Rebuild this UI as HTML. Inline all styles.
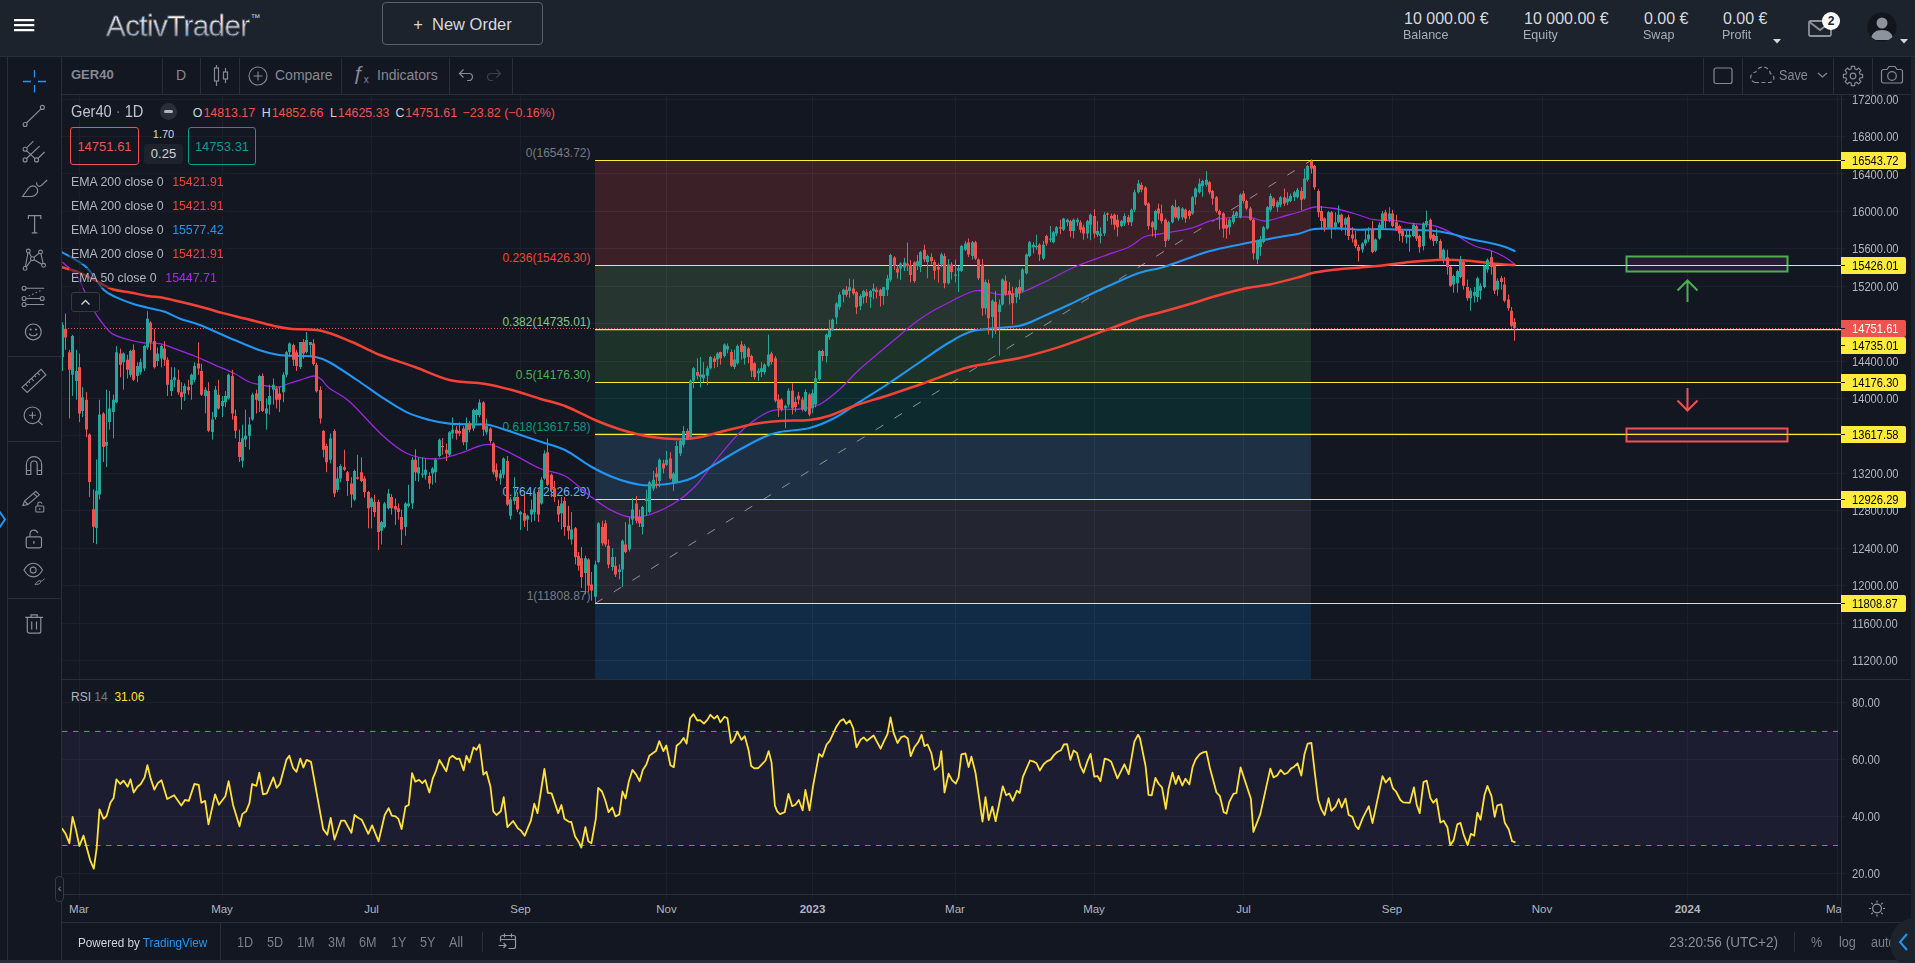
<!DOCTYPE html>
<html lang="en"><head><meta charset="utf-8"><title>ActivTrader</title>
<style>
*{box-sizing:border-box;margin:0;padding:0}
html,body{width:1915px;height:963px;overflow:hidden;background:#131722}
body{font-family:"Liberation Sans","DejaVu Sans",sans-serif;color:#b2b5be;position:relative}
#app{position:absolute;left:0;top:0;width:1915px;height:963px;overflow:hidden;background:#131722}
.abs{position:absolute;white-space:nowrap;line-height:1}
#hdr{position:absolute;left:0;top:0;width:1915px;height:56px;background:#1c232c;border-bottom:0}
.ax{position:absolute;left:1851.5px;font-size:12px;color:#b2b5be;line-height:12px;height:12px;white-space:nowrap}
.tag{position:absolute;left:1841px;width:65px;height:17px;border-radius:0 2px 2px 0;font-size:12px;line-height:18px;padding-left:11px;color:#000;background:#ffeb3b;white-space:nowrap}
.tag:before{content:"";position:absolute;left:0;top:8px;width:4px;height:1px;background:#131722}
.tl{position:absolute;top:903px;font-size:11.5px;color:#b2b5be;line-height:12px;transform:translateX(-50%);white-space:nowrap}
.fib{position:absolute;right:1325px;font-size:11.5px;line-height:12px;white-space:nowrap}
.ema{position:absolute;left:69px;padding:3px 4px 3px 2px;margin-top:-3px;background:rgba(19,23,34,.5);font-size:13px;line-height:14px;color:#b2b5be;white-space:nowrap;transform-origin:0 50%;transform:scaleX(.95)}
.ema b{font-weight:normal;margin-left:9px}
.tb{position:absolute;top:57px;height:36px;line-height:36px;font-size:14px;color:#868993;white-space:nowrap}
.sep{position:absolute;top:58px;width:1px;height:36px;background:#2a2e39}
.rg{position:absolute;top:934px;font-size:14px;line-height:16px;color:#7c7f8a;white-space:nowrap;transform-origin:0 50%;transform:scaleX(.9)}
.hv{position:absolute;top:9.5px;margin-left:1px;font-size:16px;line-height:18px;color:#d6d9de;white-space:nowrap}
.hl{position:absolute;top:27px;font-size:13.5px;line-height:16px;transform-origin:0 50%;transform:scaleX(.93);color:#a9aeb6;white-space:nowrap}
.ic{position:absolute;left:20px;width:28px;height:28px}
.ic svg{width:28px;height:28px;display:block}
.sx{display:inline-block;transform-origin:0 50%}
.ax span,.tag span{display:inline-block;transform-origin:0 50%;transform:scaleX(.93)}
</style></head><body><div id="app">
<svg width="1915" height="963" viewBox="0 0 1915 963" style="position:absolute;left:0;top:0;font-family:Liberation Sans,sans-serif" shape-rendering="auto">
<defs><clipPath id="cm"><rect x="62" y="95" width="1779" height="584"/></clipPath><clipPath id="cr"><rect x="62" y="680" width="1779" height="214"/></clipPath></defs>
<path d="M79.5 95V679M79.5 680V899M222.5 95V679M222.5 680V899M371.5 95V679M371.5 680V899M520.5 95V679M520.5 680V899M666.5 95V679M666.5 680V899M812.5 95V679M812.5 680V899M955.5 95V679M955.5 680V899M1094.5 95V679M1094.5 680V899M1243.5 95V679M1243.5 680V899M1392.5 95V679M1392.5 680V899M1542.5 95V679M1542.5 680V899M1687.5 95V679M1687.5 680V899M1837.5 95V679M1837.5 680V899M62 660.5H1846M62 623.1H1846M62 585.6H1846M62 548.2H1846M62 510.8H1846M62 473.3H1846M62 435.9H1846M62 398.5H1846M62 361.0H1846M62 323.6H1846M62 286.2H1846M62 248.7H1846M62 211.3H1846M62 173.9H1846M62 136.4H1846M62 99.0H1846M62 873.2H1846M62 816.3H1846M62 759.3H1846M62 702.4H1846" stroke="#1c202c" stroke-width="1" fill="none" shape-rendering="crispEdges"/>
<g clip-path="url(#cm)">
<rect x="595" y="160.5" width="716" height="105.0" fill="#3b2027"/>
<rect x="595" y="265.5" width="716" height="64.1" fill="#263530"/>
<rect x="595" y="329.6" width="716" height="52.9" fill="#1d3229"/>
<rect x="595" y="382.5" width="716" height="51.9" fill="#0d2b2e"/>
<rect x="595" y="434.4" width="716" height="65.1" fill="#1e3044"/>
<rect x="595" y="499.5" width="716" height="104.0" fill="#232630"/>
<rect x="595" y="603.5" width="716" height="75.5" fill="#112b46"/>
<path d="M666.5 160.5V679M812.5 160.5V679M955.5 160.5V679M1094.5 160.5V679M1243.5 160.5V679M595 660.5H1311M595 623.1H1311M595 585.6H1311M595 548.2H1311M595 510.8H1311M595 473.3H1311M595 435.9H1311M595 398.5H1311M595 361.0H1311M595 323.6H1311M595 286.2H1311M595 248.7H1311M595 211.3H1311M595 173.9H1311" stroke="#ffffff" stroke-opacity="0.05" stroke-width="1" fill="none" shape-rendering="crispEdges"/>
<path d="M595 603.5L1311 160.5" stroke="#8f929b" stroke-width="1" stroke-dasharray="9 13" fill="none"/>
<path d="M595 160.50H1841" stroke="#ffeb3b" stroke-width="1.1" fill="none"/>
<path d="M595 265.50H1841" stroke="#ffeb3b" stroke-width="1.1" fill="none"/>
<path d="M595 329.60H1841" stroke="#ffeb3b" stroke-width="1.1" fill="none"/>
<path d="M595 382.50H1841" stroke="#ffeb3b" stroke-width="1.1" fill="none"/>
<path d="M595 434.40H1841" stroke="#ffeb3b" stroke-width="1.1" fill="none"/>
<path d="M595 499.50H1841" stroke="#ffeb3b" stroke-width="1.1" fill="none"/>
<path d="M595 603.50H1841" stroke="#ffeb3b" stroke-width="1.1" fill="none"/>
<rect x="1626.5" y="256.5" width="161" height="15" fill="#2a1a38" stroke="#4caf50" stroke-width="2"/>
<path d="M62 265.9H1841" stroke="#ffeb3b" stroke-width="1.1" opacity="0"/>
<path d="M1626 265.50H1788" stroke="#ffeb3b" stroke-width="1.1"/>
<rect x="1626.5" y="428.5" width="161" height="13" fill="#2a1a38" stroke="#ef5350" stroke-width="2"/>
<path d="M1626 434.40H1788" stroke="#ffeb3b" stroke-width="1.1"/>
<path d="M1687.5 302V280.5M1677.5 290.5L1687.5 280.5L1697.5 290.5" stroke="#4caf50" stroke-width="2" fill="none"/>
<path d="M1687.5 388V410.5M1677.5 400.5L1687.5 410.5L1697.5 400.5" stroke="#ef5350" stroke-width="2" fill="none"/>
<path d="M62 328.5H1841" stroke="#ef5350" stroke-width="1" stroke-dasharray="1 2" fill="none" shape-rendering="crispEdges"/>
<text x="590.5" y="156.7" text-anchor="end" font-size="12" fill="#787b86">0(16543.72)</text>
<text x="590.5" y="261.7" text-anchor="end" font-size="12" fill="#f44336">0.236(15426.30)</text>
<text x="590.5" y="325.8" text-anchor="end" font-size="12" fill="#81c784">0.382(14735.01)</text>
<text x="590.5" y="378.7" text-anchor="end" font-size="12" fill="#4caf50">0.5(14176.30)</text>
<text x="590.5" y="430.6" text-anchor="end" font-size="12" fill="#089981">0.618(13617.58)</text>
<text x="590.5" y="495.7" text-anchor="end" font-size="12" fill="#64b5f6">0.764(12926.29)</text>
<text x="590.5" y="599.7" text-anchor="end" font-size="12" fill="#787b86">1(11808.87)</text>
<path d="M62.0 262.0C64.4 264.2 72.4 269.8 76.5 275.4C80.6 281.0 83.8 290.0 86.4 295.4C89.0 300.8 89.7 303.4 92.0 307.5C94.3 311.6 96.7 315.6 100.0 320.0C103.3 324.4 107.0 330.3 112.0 333.6C117.0 336.9 124.5 338.4 130.0 340.0C135.4 341.6 139.8 342.4 144.7 343.0C149.6 343.6 154.7 342.7 159.7 343.6C164.7 344.5 168.8 346.5 174.6 348.6C180.4 350.7 187.9 353.3 194.6 356.0C201.2 358.7 207.8 361.9 214.5 364.8C221.2 367.7 228.7 370.6 234.5 373.5C240.3 376.4 244.0 379.9 249.4 382.0C254.8 384.1 262.1 385.2 267.0 386.0C271.9 386.8 275.3 387.4 279.0 387.0C282.7 386.6 285.5 384.7 289.0 383.5C292.5 382.3 295.8 381.2 300.0 380.0C304.2 378.8 310.3 376.0 314.0 376.0C317.7 376.0 319.5 378.0 322.0 380.0C324.5 382.0 324.3 384.3 329.0 388.0C333.7 391.7 341.2 394.2 350.0 402.0C358.8 409.8 372.5 426.4 382.0 435.0C391.5 443.6 398.2 449.5 407.0 453.5C415.8 457.5 425.9 459.0 434.6 459.0C443.4 459.0 452.0 455.7 459.5 453.5C467.0 451.3 474.0 447.4 479.4 446.0C484.8 444.6 486.2 443.3 492.0 444.8C497.8 446.3 506.0 450.9 514.0 454.8C522.0 458.8 531.5 465.0 540.0 468.5C548.5 472.0 556.7 471.4 565.0 476.0C573.3 480.6 582.5 490.4 590.0 496.0C597.5 501.6 603.4 506.1 610.0 509.6C616.6 513.1 623.1 516.2 629.7 517.0C636.3 517.8 642.2 516.9 649.7 514.6C657.2 512.3 667.1 507.6 674.6 503.0C682.1 498.4 687.9 493.8 694.5 487.0C701.1 480.2 707.9 470.1 714.5 462.0C721.1 453.9 727.8 445.3 734.0 438.6C740.2 431.9 745.7 426.6 752.0 422.0C758.3 417.4 764.1 412.9 772.0 410.7C779.9 408.5 791.7 410.0 799.6 409.0C807.5 408.0 813.0 407.8 819.6 404.5C826.2 401.2 832.9 395.3 839.5 389.5C846.1 383.7 851.5 376.9 859.4 369.6C867.3 362.4 876.9 354.4 887.0 346.0C897.1 337.6 910.3 325.9 920.0 319.0C929.7 312.1 935.8 309.2 945.0 304.5C954.2 299.8 965.9 292.5 975.0 290.8C984.1 289.1 992.3 294.1 999.8 294.5C1007.2 294.9 1012.2 295.1 1019.7 293.0C1027.2 290.9 1035.5 286.3 1044.6 282.0C1053.7 277.7 1064.6 271.3 1074.5 267.0C1084.4 262.7 1094.9 259.3 1104.0 256.0C1113.1 252.7 1122.3 250.2 1129.0 247.0C1135.7 243.8 1138.8 239.2 1144.0 237.0C1149.2 234.8 1152.3 235.4 1160.0 234.0C1167.7 232.6 1180.8 230.8 1190.0 228.4C1199.2 226.0 1205.5 221.6 1215.0 219.7C1224.5 217.8 1238.7 216.8 1247.0 217.0C1255.3 217.2 1258.4 221.2 1264.7 221.0C1271.0 220.8 1278.8 217.5 1284.6 216.0C1290.4 214.5 1294.6 213.5 1299.6 212.0C1304.6 210.5 1308.7 207.6 1314.5 207.0C1320.3 206.4 1327.9 207.4 1334.5 208.5C1341.1 209.6 1347.4 211.6 1354.0 213.5C1360.6 215.4 1367.2 218.5 1374.0 219.7C1380.8 220.9 1388.7 219.9 1395.0 220.5C1401.3 221.1 1405.3 222.6 1412.0 223.5C1418.7 224.4 1427.8 224.1 1435.0 226.0C1442.2 227.9 1448.4 231.4 1455.0 234.7C1461.6 238.0 1468.5 243.3 1474.7 246.0C1480.9 248.7 1487.0 249.2 1492.0 251.0C1497.0 252.8 1500.8 254.8 1504.6 257.0C1508.4 259.2 1512.9 262.8 1514.6 264.0" stroke="#9c27e0" stroke-width="1.3" fill="none" stroke-linejoin="round"/>
<path d="M62.0 252.3C63.8 253.2 68.7 255.6 72.5 257.9C76.3 260.2 81.7 263.2 85.0 266.0C88.3 268.8 89.4 270.8 92.6 274.8C95.8 278.8 99.9 286.1 103.9 289.9C107.9 293.7 111.6 295.1 116.4 297.4C121.2 299.7 127.5 302.0 132.7 303.7C137.9 305.4 142.5 306.4 147.7 307.7C152.9 309.0 158.6 309.8 164.0 311.6C169.4 313.4 174.7 316.6 180.3 318.7C185.9 320.8 192.9 322.6 197.8 324.3C202.7 326.0 203.4 326.4 209.5 329.0C215.6 331.6 226.2 336.5 234.5 340.0C242.8 343.5 251.6 347.5 259.0 350.0C266.4 352.5 272.2 354.0 279.0 355.0C285.8 356.0 294.2 355.7 300.0 356.0C305.8 356.3 309.2 355.6 314.0 356.6C318.8 357.6 321.8 358.1 329.0 362.0C336.2 365.9 348.2 374.1 357.0 380.0C365.8 385.9 373.7 392.0 382.0 397.4C390.3 402.8 399.1 408.6 407.0 412.4C414.9 416.2 422.5 418.1 429.6 420.0C436.7 421.9 442.0 422.9 449.5 423.6C457.0 424.3 467.9 424.2 474.5 424.4C481.1 424.6 483.1 423.7 489.4 425.0C495.6 426.3 503.6 429.2 512.0 432.0C520.4 434.8 531.2 438.5 540.0 441.5C548.8 444.5 556.7 445.9 565.0 450.0C573.3 454.1 581.7 461.3 590.0 466.0C598.3 470.7 606.7 474.9 615.0 478.0C623.3 481.1 632.6 483.6 640.0 484.7C647.4 485.8 653.0 485.1 659.6 484.7C666.2 484.2 673.8 483.3 679.6 482.0C685.4 480.7 688.7 479.9 694.5 477.0C700.3 474.1 707.1 469.2 714.5 464.7C721.9 460.2 730.8 454.6 739.0 450.0C747.2 445.4 757.2 440.0 764.0 437.0C770.8 434.0 772.4 433.5 780.0 432.0C787.6 430.5 800.5 430.3 809.6 428.0C818.7 425.7 826.2 422.3 834.5 418.0C842.8 413.7 850.6 407.6 859.4 402.0C868.1 396.4 876.9 391.2 887.0 384.5C897.1 377.8 909.5 369.1 920.0 362.0C930.5 354.9 940.8 347.2 950.0 342.0C959.2 336.8 963.4 333.3 975.0 330.6C986.6 327.9 1008.1 328.2 1019.7 325.7C1031.3 323.2 1036.3 319.2 1044.6 315.7C1052.9 312.2 1059.6 309.1 1069.5 304.5C1079.4 299.9 1092.4 293.2 1104.0 288.0C1115.6 282.8 1129.7 276.3 1139.0 273.0C1148.3 269.7 1152.3 270.2 1160.0 268.0C1167.7 265.8 1176.7 262.4 1185.0 259.6C1193.3 256.8 1199.7 253.8 1210.0 251.0C1220.3 248.2 1235.4 245.3 1247.0 243.0C1258.6 240.7 1270.8 238.6 1279.6 237.0C1288.4 235.4 1293.8 234.7 1299.6 233.4C1305.4 232.1 1307.9 229.8 1314.5 229.0C1321.1 228.2 1331.6 228.3 1339.0 228.4C1346.4 228.5 1352.3 229.6 1359.0 229.7C1365.7 229.8 1371.3 229.0 1379.0 229.0C1386.7 229.0 1396.5 229.6 1405.0 229.8C1413.5 230.1 1422.5 229.9 1430.0 230.5C1437.5 231.1 1443.3 232.1 1450.0 233.5C1456.7 234.9 1463.3 237.4 1470.0 239.0C1476.7 240.6 1484.2 241.7 1490.0 243.0C1495.8 244.3 1500.5 245.4 1504.6 246.7C1508.7 248.0 1512.9 250.3 1514.6 251.0" stroke="#2196f3" stroke-width="2.1" fill="none" stroke-linejoin="round" stroke-linecap="round"/>
<path d="M62.0 267.3C64.8 268.1 72.9 269.9 78.8 272.3C84.7 274.7 92.0 278.9 97.6 281.7C103.2 284.5 107.2 287.5 112.6 289.3C118.0 291.1 124.3 291.3 130.2 292.4C136.0 293.5 142.1 295.0 147.7 295.9C153.3 296.8 158.6 297.0 164.0 298.0C169.4 299.0 173.6 300.2 180.3 301.8C187.0 303.4 196.9 305.8 204.0 307.7C211.1 309.6 215.6 311.2 222.9 313.1C230.2 315.0 239.7 317.2 248.0 319.3C256.4 321.4 266.0 324.0 273.0 325.6C280.0 327.2 281.8 327.9 290.0 328.8C298.2 329.7 311.7 328.8 322.0 331.0C332.3 333.2 342.3 338.0 352.0 342.0C361.7 346.0 369.5 350.8 380.0 355.0C390.5 359.2 403.4 362.8 415.0 367.0C426.6 371.2 438.0 377.2 449.5 380.0C461.0 382.8 473.6 382.0 484.0 383.7C494.4 385.4 502.7 387.5 512.0 390.0C521.3 392.5 531.2 396.0 540.0 398.7C548.8 401.4 555.8 402.4 565.0 406.0C574.2 409.6 585.5 416.0 595.0 420.0C604.5 424.0 612.8 427.2 622.0 430.0C631.2 432.8 640.4 435.2 650.0 436.8C659.6 438.4 671.4 439.2 679.6 439.3C687.9 439.4 692.1 438.7 699.5 437.3C706.9 435.9 714.9 433.2 724.0 431.0C733.1 428.8 744.7 425.7 754.0 424.0C763.3 422.3 770.7 421.7 780.0 421.0C789.3 420.3 801.4 420.9 809.6 420.0C817.9 419.1 822.0 418.1 829.5 415.7C837.0 413.3 844.9 409.0 854.5 405.7C864.1 402.4 876.1 399.2 887.0 395.7C897.9 392.2 912.4 387.1 920.0 384.5C927.6 381.9 924.2 382.9 932.5 380.0C940.8 377.1 955.5 370.5 970.0 366.8C984.5 363.1 1004.8 361.3 1019.7 358.0C1034.6 354.7 1045.5 351.4 1059.6 346.9C1073.7 342.3 1091.2 335.5 1104.4 330.7C1117.6 325.9 1129.7 321.0 1139.0 318.0C1148.3 315.0 1151.5 314.8 1160.0 312.5C1168.5 310.2 1180.5 306.8 1190.0 304.0C1199.5 301.2 1207.5 298.4 1217.0 295.7C1226.5 293.0 1238.2 289.9 1247.0 288.0C1255.8 286.1 1260.9 286.3 1269.7 284.5C1278.5 282.7 1292.1 279.0 1299.6 277.0C1307.1 275.0 1307.1 273.9 1314.5 272.5C1321.9 271.1 1334.1 269.8 1344.0 268.8C1353.9 267.8 1364.7 267.2 1374.0 266.3C1383.3 265.4 1394.0 264.0 1400.0 263.3C1406.0 262.6 1403.0 262.6 1410.0 262.0C1417.0 261.4 1432.8 260.0 1442.0 259.7C1451.2 259.4 1456.7 259.8 1465.0 260.4C1473.3 261.0 1483.7 262.6 1492.0 263.4C1500.3 264.2 1510.8 264.7 1514.6 265.0" stroke="#f44336" stroke-width="2.5" fill="none" stroke-linejoin="round" stroke-linecap="round"/>
<path d="M62.5 322.4V371.0M72.5 334.9V396.0M76.5 349.8V399.7M82.5 387.2V417.1M96.5 459.5V544.2M99.5 399.7V499.4M106.5 389.7V467.0M109.5 391.0V429.6M113.5 394.7V438.3M116.5 346.1V403.4M123.5 352.3V389.7M130.5 349.8V377.3M137.5 362.3V382.2M140.5 358.6V374.8M144.5 344.9V371.0M147.5 311.2V349.8M157.5 347.4V366.0M161.5 344.9V367.3M171.5 367.3V396.0M174.5 367.3V387.2M184.5 383.5V400.9M191.5 373.5V399.7M194.5 362.3V382.2M205.5 387.2V413.4M212.5 412.1V439.6M215.5 386.0V419.6M222.5 396.0V417.1M225.5 391.0V407.2M228.5 373.5V399.7M242.5 424.6V467.5M245.5 409.7V447.0M249.5 417.1V449.5M252.5 392.7V420.9M259.5 374.8V412.1M266.5 398.4V429.6M269.5 384.7V414.6M273.5 378.5V404.7M283.5 372.3V402.2M286.5 351.1V377.3M289.5 342.4V357.3M300.5 342.0V369.0M306.5 332.0V353.6M310.5 342.0V356.5M330.5 433.6V463.5M337.5 467.2V492.1M340.5 464.2V482.2M354.5 469.7V500.9M371.5 497.1V528.3M381.5 520.8V544.5M384.5 502.1V528.3M388.5 489.2V509.6M405.5 502.1V535.8M408.5 484.7V507.6M412.5 457.3V509.1M418.5 457.8V481.7M422.5 457.3V477.7M425.5 458.5V479.7M432.5 467.2V484.7M435.5 457.8V482.7M439.5 438.6V457.3M449.5 431.1V456.0M452.5 417.4V438.6M466.5 417.4V449.8M473.5 408.7V431.1M476.5 408.7V424.9M479.5 399.4V417.4M486.5 418.6V434.8M500.5 469.7V484.7M503.5 457.3V478.4M510.5 497.1V519.6M514.5 477.2V504.6M520.5 510.8V530.0M527.5 514.6V530.8M531.5 499.6V522.1M534.5 490.9V520.8M541.5 477.2V504.6M544.5 450.3V479.7M561.5 497.1V529.5M571.5 512.1V544.5M585.5 555.7V594.3M595.5 560.7V603.1M598.5 522.1V563.2M612.5 548.2V570.7M619.5 564.4V579.4M622.5 539.5V586.9M629.5 517.1V551.5M632.5 498.4V525.0M642.5 505.9V534.5M646.5 489.7V515.8M649.5 480.9V513.3M653.5 471.0V490.9M659.5 458.5V487.2M666.5 451.0V466.0M673.5 472.2V490.9M676.5 441.1V483.4M680.5 439.8V456.0M683.5 426.1V447.3M690.5 379.5V438.1M693.5 367.1V388.3M700.5 357.1V387.5M703.5 362.1V382.0M707.5 365.8V385.0M710.5 355.9V369.6M717.5 352.1V367.1M724.5 343.4V357.6M727.5 343.4V353.4M734.5 349.6V369.1M737.5 344.6V364.6M744.5 344.1V364.6M758.5 368.3V380.8M761.5 362.1V377.0M764.5 363.3V374.5M768.5 334.7V367.1M785.5 404.5V428.1M788.5 388.3V407.4M805.5 389.5V411.9M812.5 389.5V413.2M815.5 370.8V407.4M819.5 350.1V380.8M826.5 333.4V362.6M829.5 319.7V339.7M832.5 318.5V330.9M836.5 302.3V324.2M839.5 292.3V309.8M843.5 288.6V302.3M849.5 278.6V297.8M860.5 294.3V310.2M863.5 289.8V303.5M870.5 289.8V307.8M873.5 283.6V299.3M883.5 286.8V304.8M887.5 274.9V296.0M890.5 253.7V281.8M900.5 262.4V279.8M904.5 257.9V271.1M917.5 254.9V269.9M920.5 250.9V272.1M927.5 254.6V278.3M941.5 252.6V267.1M948.5 259.1V284.5M955.5 259.6V282.6M958.5 265.9V292.0M961.5 244.7V272.1M965.5 240.9V250.9M972.5 240.9V259.6M985.5 279.6V314.5M992.5 299.5V338.1M999.5 299.5V355.6M1002.5 278.3V305.7M1016.5 287.0V303.2M1022.5 268.3V292.5M1026.5 253.4V274.6M1029.5 240.9V257.1M1033.5 242.2V253.4M1036.5 234.7V249.7M1043.5 240.9V260.1M1050.5 226.0V242.2M1053.5 231.0V243.4M1056.5 226.0V236.0M1063.5 217.8V231.0M1067.5 218.5V226.0M1073.5 218.5V238.4M1077.5 217.8V226.0M1087.5 219.8V238.4M1090.5 213.5V240.2M1097.5 221.0V237.2M1100.5 227.2V243.4M1104.5 212.3V236.0M1121.5 219.8V227.2M1124.5 213.5V226.0M1131.5 208.5V226.0M1134.5 189.8V212.3M1138.5 179.9V193.6M1155.5 209.8V237.7M1168.5 220.9V240.9M1172.5 204.7V223.4M1178.5 206.0V220.9M1182.5 207.2V219.7M1192.5 196.0V214.7M1195.5 187.3V204.7M1199.5 178.6V193.5M1202.5 179.8V196.8M1206.5 171.1V186.8M1229.5 218.4V234.6M1233.5 211.0V224.2M1236.5 211.0V217.7M1240.5 193.5V218.4M1257.5 239.6V264.0M1260.5 235.9V255.8M1263.5 225.9V243.4M1267.5 206.0V229.7M1270.5 193.5V211.7M1277.5 200.2V211.7M1280.5 196.0V207.2M1287.5 192.3V205.2M1290.5 193.5V202.2M1294.5 191.0V201.0M1297.5 187.8V198.5M1304.5 168.6V199.8M1307.5 164.9V181.8M1328.5 211.0V228.4M1335.5 212.2V229.7M1338.5 205.5V223.4M1345.5 217.2V235.1M1362.5 242.1V252.6M1365.5 229.7V245.9M1368.5 227.2V242.1M1375.5 238.4V252.1M1379.5 222.3V239.7M1382.5 211.1V229.8M1389.5 207.3V222.3M1406.5 231.0V243.5M1409.5 229.8V251.7M1413.5 222.8V237.2M1423.5 222.3V250.4M1426.5 210.6V227.3M1436.5 228.5V243.5M1443.5 248.4V263.4M1453.5 274.6V292.6M1457.5 269.6V292.6M1460.5 255.9V278.3M1470.5 288.3V310.7M1474.5 287.1V302.5M1477.5 276.6V302.0M1480.5 283.3V299.5M1484.5 264.6V288.3M1487.5 258.4V272.6M1497.5 278.3V295.8" stroke="#26a69a" stroke-width="1" fill="none"/>
<path d="M65.5 313.7V349.8M69.5 349.8V418.4M79.5 353.6V422.1M86.5 392.2V437.1M89.5 433.3V496.9M93.5 489.4V543.0M103.5 412.1V462.0M120.5 348.6V377.3M127.5 354.8V378.5M133.5 344.4V381.0M150.5 321.2V349.8M154.5 328.7V368.5M164.5 341.1V366.0M167.5 357.3V396.0M178.5 369.8V394.7M181.5 382.2V409.7M188.5 379.8V394.7M198.5 342.4V374.8M201.5 363.6V396.0M208.5 382.2V432.1M218.5 379.8V409.7M232.5 369.8V419.6M235.5 409.7V438.3M239.5 429.6V462.0M256.5 389.7V413.4M262.5 373.5V412.1M276.5 386.0V408.4M279.5 387.2V412.1M293.5 343.6V366.0M296.5 349.8V371.0M303.5 339.1V358.9M313.5 339.1V365.7M316.5 362.6V392.5M320.5 386.2V423.6M323.5 429.8V457.3M326.5 443.6V472.2M334.5 429.3V497.1M344.5 449.8V471.0M347.5 471.0V495.9M351.5 477.2V507.6M357.5 454.8V479.7M361.5 457.3V482.2M364.5 476.0V497.6M368.5 490.9V528.3M374.5 494.6V517.1M378.5 499.6V550.0M391.5 494.1V514.6M395.5 498.4V525.0M398.5 503.4V519.6M401.5 509.6V545.0M415.5 449.3V480.9M429.5 472.2V488.9M442.5 438.1V454.8M446.5 443.6V461.0M456.5 426.1V439.8M459.5 422.4V436.1M463.5 426.1V445.3M469.5 421.1V432.3M483.5 401.2V436.1M490.5 427.4V443.6M493.5 442.3V474.7M496.5 463.5V480.9M507.5 456.0V505.9M517.5 492.1V512.1M524.5 494.6V527.0M538.5 489.7V522.1M547.5 438.6V485.9M551.5 473.5V497.1M554.5 480.9V502.1M558.5 499.6V522.1M564.5 497.1V535.8M568.5 505.9V539.5M575.5 527.0V564.4M578.5 552.0V570.7M581.5 547.0V588.1M588.5 558.2V591.8M591.5 571.9V600.6M602.5 520.8V545.7M605.5 520.1V547.0M608.5 539.5V568.2M615.5 556.9V576.9M625.5 522.1V553.2M636.5 495.9V523.3M639.5 509.6V527.0M656.5 467.2V488.4M663.5 459.8V473.5M670.5 452.3V479.7M687.5 428.6V439.8M697.5 358.3V379.5M714.5 355.9V368.3M720.5 351.6V364.6M731.5 349.6V367.1M741.5 340.9V359.6M748.5 347.1V363.3M751.5 354.6V377.0M754.5 362.1V379.5M771.5 351.6V364.6M775.5 355.9V402.5M778.5 394.5V416.9M781.5 398.2V411.4M792.5 383.3V414.4M795.5 397.0V411.9M798.5 392.0V404.5M802.5 397.0V411.4M809.5 393.2V416.4M822.5 349.6V360.8M846.5 286.1V296.8M853.5 279.3V295.3M856.5 291.1V314.0M866.5 289.3V302.8M876.5 287.3V298.5M880.5 288.6V306.5M894.5 256.2V269.9M897.5 264.9V278.6M907.5 242.5V271.1M910.5 259.9V282.3M914.5 261.2V282.8M924.5 244.7V262.1M931.5 253.4V264.6M934.5 259.6V279.6M938.5 263.4V282.6M944.5 253.4V288.3M951.5 262.1V279.6M968.5 238.4V257.1M975.5 240.9V260.1M978.5 258.4V280.1M982.5 259.1V315.7M988.5 279.6V334.4M995.5 290.8V333.9M1005.5 275.3V295.8M1009.5 282.1V304.5M1012.5 287.0V324.4M1019.5 279.6V299.5M1039.5 243.4V260.9M1046.5 234.7V245.9M1060.5 219.8V234.2M1070.5 219.8V237.2M1080.5 220.2V232.7M1083.5 224.7V239.7M1094.5 209.3V238.4M1107.5 212.3V221.0M1111.5 213.5V224.7M1114.5 213.5V229.7M1117.5 214.8V236.4M1128.5 214.8V225.2M1141.5 182.4V192.3M1145.5 186.1V206.0M1148.5 202.3V229.7M1152.5 221.0V236.4M1158.5 203.6V219.8M1161.5 204.7V223.4M1165.5 218.4V247.1M1175.5 199.8V218.4M1185.5 208.5V222.7M1189.5 209.7V219.2M1209.5 181.1V194.3M1212.5 189.8V204.7M1216.5 196.0V212.7M1219.5 209.7V229.7M1223.5 212.2V237.6M1226.5 218.4V238.6M1243.5 191.0V203.5M1246.5 199.8V210.2M1250.5 206.7V220.9M1253.5 218.4V259.6M1273.5 197.3V207.7M1284.5 188.5V206.0M1301.5 187.3V210.2M1311.5 159.4V173.6M1314.5 164.9V189.8M1318.5 189.3V217.2M1321.5 206.0V229.7M1324.5 217.2V231.7M1331.5 211.0V238.6M1341.5 213.5V230.9M1348.5 214.7V240.1M1352.5 227.2V242.6M1355.5 230.9V248.3M1358.5 244.6V261.6M1372.5 220.9V253.3M1385.5 209.8V227.8M1392.5 209.8V227.3M1396.5 214.8V231.0M1399.5 224.7V240.9M1402.5 229.8V242.7M1416.5 224.8V241.0M1419.5 234.7V252.7M1430.5 218.5V240.2M1433.5 233.5V246.0M1440.5 239.2V259.7M1447.5 249.7V274.6M1450.5 265.9V287.1M1463.5 260.9V289.6M1467.5 279.6V300.8M1491.5 250.9V274.6M1494.5 263.4V294.0M1501.5 275.9V289.6M1504.5 277.1V302.5M1508.5 294.5V310.7M1511.5 307.0V327.4M1514.5 318.2V340.7" stroke="#ef5350" stroke-width="1" fill="none"/>
<path d="M61.0 324.9h3V357.3h-3zM71.0 336.1h3V374.8h-3zM75.0 371.0h3V381.0h-3zM81.0 397.2h3V410.9h-3zM95.0 490.7h3V528.0h-3zM98.0 414.6h3V494.4h-3zM105.0 442.1h3V445.8h-3zM108.0 408.4h3V422.1h-3zM112.0 399.7h3V412.1h-3zM115.0 352.3h3V402.2h-3zM122.0 353.6h3V362.3h-3zM129.0 351.1h3V374.8h-3zM136.0 366.0h3V376.0h-3zM139.0 362.3h3V372.3h-3zM143.0 346.1h3V368.5h-3zM146.0 318.7h3V347.4h-3zM156.0 353.6h3V361.1h-3zM160.0 346.1h3V358.6h-3zM170.0 379.8h3V391.0h-3zM173.0 377.3h3V380.2h-3zM183.0 386.0h3V393.5h-3zM190.0 374.8h3V384.7h-3zM193.0 366.0h3V379.8h-3zM204.0 389.7h3V396.0h-3zM211.0 419.6h3V432.1h-3zM214.0 389.7h3V417.1h-3zM221.0 400.9h3V405.9h-3zM224.0 396.0h3V402.2h-3zM227.0 374.8h3V398.4h-3zM241.0 438.3h3V460.7h-3zM244.0 435.8h3V439.6h-3zM248.0 424.6h3V435.8h-3zM251.0 394.7h3V419.6h-3zM258.0 376.0h3V400.9h-3zM265.0 408.4h3V413.4h-3zM268.0 396.0h3V404.7h-3zM272.0 384.7h3V389.7h-3zM282.0 374.8h3V392.2h-3zM285.0 352.3h3V374.8h-3zM288.0 343.6h3V352.3h-3zM299.0 342.0h3V366.9h-3zM305.0 339.9h3V352.1h-3zM309.0 342.0h3V344.9h-3zM329.0 438.6h3V459.8h-3zM336.0 478.4h3V489.7h-3zM339.0 466.0h3V478.4h-3zM353.0 471.0h3V499.6h-3zM370.0 498.4h3V507.1h-3zM380.0 522.1h3V530.8h-3zM383.0 503.4h3V527.0h-3zM387.0 493.4h3V508.3h-3zM404.0 503.4h3V527.0h-3zM407.0 503.4h3V505.9h-3zM411.0 459.8h3V503.4h-3zM417.0 467.2h3V473.5h-3zM421.0 473.5h3V474.7h-3zM424.0 469.7h3V474.7h-3zM431.0 468.5h3V473.5h-3zM434.0 459.8h3V472.2h-3zM438.0 439.8h3V456.0h-3zM448.0 432.3h3V454.8h-3zM451.0 429.8h3V433.6h-3zM465.0 423.6h3V442.3h-3zM472.0 409.9h3V428.6h-3zM475.0 409.9h3V414.9h-3zM478.0 402.4h3V414.9h-3zM485.0 426.1h3V432.3h-3zM499.0 473.5h3V478.4h-3zM502.0 458.5h3V474.7h-3zM509.0 499.6h3V515.8h-3zM513.0 497.1h3V500.9h-3zM519.0 512.1h3V514.6h-3zM526.0 515.8h3V519.6h-3zM530.0 509.6h3V514.6h-3zM533.0 493.4h3V512.1h-3zM540.0 479.7h3V503.4h-3zM543.0 453.5h3V478.4h-3zM560.0 503.4h3V513.3h-3zM570.0 529.5h3V539.5h-3zM584.0 558.2h3V573.1h-3zM594.0 564.4h3V596.8h-3zM597.0 523.3h3V561.9h-3zM611.0 556.9h3V566.9h-3zM618.0 569.4h3V571.9h-3zM621.0 540.7h3V569.4h-3zM628.0 524.5h3V549.5h-3zM631.0 509.6h3V519.6h-3zM641.0 507.1h3V527.0h-3zM645.0 498.4h3V500.9h-3zM648.0 482.2h3V512.1h-3zM652.0 479.7h3V488.4h-3zM658.0 459.8h3V480.9h-3zM665.0 459.8h3V464.7h-3zM672.0 473.5h3V482.2h-3zM675.0 446.0h3V482.2h-3zM679.0 441.1h3V453.5h-3zM682.0 431.1h3V444.8h-3zM689.0 380.8h3V436.9h-3zM692.0 368.3h3V380.8h-3zM699.0 374.5h3V377.0h-3zM702.0 374.5h3V378.3h-3zM706.0 368.3h3V375.8h-3zM709.0 357.1h3V368.3h-3zM716.0 353.4h3V359.6h-3zM723.0 344.6h3V355.9h-3zM726.0 345.9h3V349.6h-3zM733.0 359.6h3V367.1h-3zM736.0 345.9h3V363.3h-3zM743.0 345.9h3V358.3h-3zM757.0 370.8h3V373.3h-3zM760.0 368.3h3V372.1h-3zM763.0 364.6h3V372.1h-3zM767.0 354.6h3V365.8h-3zM784.0 405.7h3V408.2h-3zM787.0 390.7h3V404.5h-3zM804.0 392.0h3V410.7h-3zM811.0 393.2h3V408.2h-3zM814.0 378.3h3V404.5h-3zM818.0 350.9h3V379.5h-3zM825.0 334.7h3V355.9h-3zM828.0 329.7h3V337.2h-3zM831.0 319.7h3V329.7h-3zM835.0 303.5h3V317.2h-3zM838.0 294.8h3V307.3h-3zM842.0 289.8h3V294.8h-3zM848.0 287.3h3V291.1h-3zM859.0 296.0h3V306.0h-3zM862.0 291.1h3V297.3h-3zM869.0 291.1h3V297.3h-3zM872.0 288.6h3V291.1h-3zM882.0 287.3h3V296.0h-3zM886.0 278.6h3V289.8h-3zM889.0 254.9h3V279.8h-3zM899.0 263.6h3V268.6h-3zM903.0 262.4h3V267.4h-3zM916.0 261.2h3V266.1h-3zM919.0 252.1h3V267.1h-3zM926.0 255.9h3V262.1h-3zM940.0 254.6h3V264.6h-3zM947.0 264.6h3V283.3h-3zM954.0 274.6h3V275.8h-3zM957.0 268.3h3V270.8h-3zM960.0 245.9h3V270.8h-3zM964.0 243.4h3V249.7h-3zM971.0 242.2h3V255.9h-3zM984.0 282.1h3V308.2h-3zM991.0 300.7h3V316.9h-3zM998.0 304.5h3V312.0h-3zM1001.0 279.6h3V304.5h-3zM1015.0 288.3h3V297.0h-3zM1021.0 269.6h3V290.8h-3zM1025.0 254.6h3V273.3h-3zM1028.0 242.2h3V255.9h-3zM1032.0 244.7h3V247.2h-3zM1035.0 245.9h3V247.2h-3zM1042.0 244.7h3V258.4h-3zM1049.0 238.4h3V239.7h-3zM1052.0 232.2h3V242.2h-3zM1055.0 227.2h3V233.5h-3zM1062.0 218.5h3V229.7h-3zM1066.0 219.8h3V222.2h-3zM1072.0 219.8h3V231.0h-3zM1076.0 219.8h3V222.2h-3zM1086.0 221.0h3V233.5h-3zM1089.0 214.8h3V224.7h-3zM1096.0 231.0h3V234.7h-3zM1099.0 233.5h3V236.0h-3zM1103.0 214.8h3V233.5h-3zM1120.0 221.0h3V226.0h-3zM1123.0 216.0h3V223.5h-3zM1130.0 209.8h3V222.2h-3zM1133.0 192.3h3V209.8h-3zM1137.0 183.6h3V192.3h-3zM1154.0 211.0h3V229.7h-3zM1167.0 222.2h3V239.6h-3zM1171.0 206.0h3V222.2h-3zM1177.0 207.2h3V218.4h-3zM1181.0 208.5h3V217.2h-3zM1191.0 197.3h3V213.5h-3zM1194.0 188.5h3V197.3h-3zM1198.0 183.6h3V192.3h-3zM1201.0 181.1h3V186.0h-3zM1205.0 179.8h3V184.8h-3zM1228.0 219.7h3V227.2h-3zM1232.0 214.7h3V222.2h-3zM1235.0 212.2h3V216.0h-3zM1239.0 194.8h3V217.2h-3zM1256.0 240.9h3V259.6h-3zM1259.0 239.6h3V247.1h-3zM1262.0 227.2h3V242.1h-3zM1266.0 207.2h3V228.4h-3zM1269.0 196.0h3V209.7h-3zM1276.0 202.2h3V207.2h-3zM1279.0 197.3h3V204.7h-3zM1286.0 198.5h3V202.2h-3zM1289.0 196.0h3V201.0h-3zM1293.0 192.3h3V197.3h-3zM1296.0 189.8h3V197.3h-3zM1303.0 178.6h3V198.5h-3zM1306.0 166.1h3V179.8h-3zM1327.0 212.2h3V227.2h-3zM1334.0 222.2h3V227.2h-3zM1337.0 214.7h3V222.2h-3zM1344.0 218.4h3V224.7h-3zM1361.0 243.4h3V249.6h-3zM1364.0 239.6h3V243.4h-3zM1367.0 234.6h3V239.6h-3zM1374.0 239.6h3V250.8h-3zM1378.0 224.8h3V238.5h-3zM1381.0 213.6h3V228.5h-3zM1388.0 213.6h3V219.8h-3zM1405.0 234.7h3V237.2h-3zM1408.0 234.7h3V237.2h-3zM1412.0 224.8h3V236.0h-3zM1422.0 223.5h3V246.0h-3zM1425.0 221.0h3V224.8h-3zM1435.0 236.0h3V241.0h-3zM1442.0 249.7h3V259.7h-3zM1452.0 275.9h3V284.6h-3zM1456.0 270.9h3V283.3h-3zM1459.0 259.7h3V277.1h-3zM1469.0 290.8h3V298.3h-3zM1473.0 292.1h3V295.8h-3zM1476.0 278.3h3V297.0h-3zM1479.0 285.8h3V290.8h-3zM1483.0 265.9h3V287.1h-3zM1486.0 259.7h3V269.6h-3zM1496.0 280.8h3V289.6h-3z" fill="#26a69a"/>
<path d="M64.0 328.7h3V337.4h-3zM68.0 352.3h3V369.8h-3zM78.0 367.3h3V413.4h-3zM85.0 399.7h3V429.6h-3zM88.0 434.6h3V481.9h-3zM92.0 509.3h3V526.8h-3zM102.0 413.4h3V447.0h-3zM119.0 353.6h3V364.8h-3zM126.0 359.8h3V369.8h-3zM132.0 349.8h3V379.8h-3zM149.0 322.4h3V342.4h-3zM153.0 341.1h3V367.3h-3zM163.0 348.6h3V359.8h-3zM166.0 359.8h3V384.7h-3zM177.0 379.8h3V392.2h-3zM180.0 392.2h3V397.2h-3zM187.0 386.7h3V390.2h-3zM197.0 363.6h3V368.5h-3zM200.0 371.0h3V394.7h-3zM207.0 391.0h3V430.8h-3zM217.0 394.7h3V408.4h-3zM231.0 376.0h3V413.4h-3zM234.0 415.9h3V430.8h-3zM238.0 442.1h3V457.0h-3zM255.0 393.5h3V399.7h-3zM261.0 376.0h3V410.9h-3zM275.0 388.5h3V399.7h-3zM278.0 393.5h3V399.7h-3zM292.0 344.9h3V359.8h-3zM295.0 352.3h3V366.0h-3zM302.0 342.0h3V353.6h-3zM312.0 343.4h3V364.0h-3zM315.0 365.0h3V391.2h-3zM319.0 390.0h3V418.6h-3zM322.0 431.1h3V449.8h-3zM325.0 446.0h3V462.2h-3zM333.0 431.1h3V493.4h-3zM343.0 467.2h3V469.7h-3zM346.0 472.2h3V480.9h-3zM350.0 483.4h3V494.6h-3zM356.0 477.2h3V478.7h-3zM360.0 472.2h3V480.9h-3zM363.0 478.4h3V492.1h-3zM367.0 492.1h3V508.3h-3zM373.0 502.1h3V512.1h-3zM377.0 502.1h3V532.0h-3zM390.0 497.1h3V508.3h-3zM394.0 505.9h3V509.6h-3zM397.0 508.3h3V512.1h-3zM400.0 517.1h3V529.5h-3zM414.0 459.8h3V472.2h-3zM428.0 476.0h3V483.4h-3zM441.0 446.0h3V447.3h-3zM445.0 449.8h3V453.5h-3zM455.0 429.8h3V433.6h-3zM458.0 431.1h3V433.6h-3zM462.0 428.6h3V442.3h-3zM468.0 423.6h3V429.8h-3zM482.0 402.4h3V429.8h-3zM489.0 428.6h3V441.1h-3zM492.0 443.6h3V472.2h-3zM495.0 469.7h3V477.2h-3zM506.0 461.0h3V504.6h-3zM516.0 497.1h3V509.6h-3zM523.0 513.3h3V520.8h-3zM537.0 492.1h3V514.6h-3zM546.0 452.3h3V484.7h-3zM550.0 474.7h3V489.7h-3zM553.0 488.4h3V497.1h-3zM557.0 505.9h3V514.6h-3zM563.0 500.9h3V527.0h-3zM567.0 525.8h3V530.8h-3zM574.0 528.3h3V556.9h-3zM577.0 555.7h3V565.7h-3zM580.0 558.2h3V576.9h-3zM587.0 559.4h3V585.6h-3zM590.0 584.4h3V590.6h-3zM601.0 527.0h3V543.2h-3zM604.0 523.3h3V544.5h-3zM607.0 545.7h3V564.4h-3zM614.0 565.7h3V574.4h-3zM624.0 544.5h3V552.0h-3zM635.0 503.4h3V520.8h-3zM638.0 517.1h3V523.3h-3zM655.0 473.5h3V477.2h-3zM662.0 463.5h3V468.5h-3zM669.0 458.5h3V478.4h-3zM686.0 431.1h3V438.6h-3zM696.0 372.1h3V375.8h-3zM713.0 358.3h3V362.1h-3zM719.0 352.1h3V358.3h-3zM730.0 352.1h3V365.8h-3zM740.0 344.6h3V352.1h-3zM747.0 348.4h3V357.1h-3zM750.0 355.9h3V370.8h-3zM753.0 363.3h3V377.0h-3zM770.0 353.4h3V362.1h-3zM774.0 358.3h3V400.7h-3zM777.0 399.5h3V408.2h-3zM780.0 399.5h3V409.4h-3zM791.0 390.7h3V408.2h-3zM794.0 402.0h3V406.9h-3zM797.0 395.7h3V399.5h-3zM801.0 399.5h3V409.4h-3zM808.0 394.5h3V414.4h-3zM821.0 350.9h3V355.9h-3zM845.0 289.8h3V294.8h-3zM852.0 288.6h3V293.6h-3zM855.0 292.3h3V307.3h-3zM865.0 292.3h3V296.0h-3zM875.0 289.8h3V292.3h-3zM879.0 289.8h3V296.0h-3zM893.0 257.4h3V266.1h-3zM896.0 268.6h3V272.4h-3zM906.0 263.6h3V266.1h-3zM909.0 264.9h3V274.9h-3zM913.0 262.4h3V281.1h-3zM923.0 249.7h3V259.6h-3zM930.0 257.1h3V260.9h-3zM933.0 262.1h3V270.8h-3zM937.0 267.1h3V269.6h-3zM943.0 255.9h3V283.3h-3zM950.0 264.6h3V272.1h-3zM967.0 242.2h3V254.6h-3zM974.0 242.2h3V258.4h-3zM977.0 259.6h3V278.3h-3zM981.0 264.6h3V308.2h-3zM987.0 283.3h3V318.2h-3zM994.0 302.0h3V330.7h-3zM1004.0 280.8h3V294.5h-3zM1008.0 290.8h3V294.5h-3zM1011.0 293.3h3V303.2h-3zM1018.0 287.0h3V293.3h-3zM1038.0 244.7h3V254.6h-3zM1045.0 236.0h3V243.4h-3zM1059.0 227.2h3V228.5h-3zM1069.0 221.0h3V231.0h-3zM1079.0 222.2h3V229.7h-3zM1082.0 227.2h3V233.5h-3zM1093.0 216.0h3V233.5h-3zM1106.0 213.5h3V214.8h-3zM1110.0 216.0h3V218.5h-3zM1113.0 214.8h3V224.7h-3zM1116.0 219.8h3V227.2h-3zM1127.0 217.3h3V222.2h-3zM1140.0 184.9h3V189.8h-3zM1144.0 187.4h3V204.8h-3zM1147.0 203.6h3V226.0h-3zM1151.0 222.2h3V227.2h-3zM1157.0 208.5h3V213.5h-3zM1160.0 213.5h3V220.9h-3zM1164.0 219.7h3V240.9h-3zM1174.0 207.2h3V217.2h-3zM1184.0 209.7h3V218.4h-3zM1188.0 211.0h3V216.0h-3zM1208.0 182.3h3V192.3h-3zM1211.0 191.0h3V198.5h-3zM1215.0 197.3h3V211.0h-3zM1218.0 211.0h3V214.7h-3zM1222.0 213.5h3V228.4h-3zM1225.0 224.7h3V228.4h-3zM1242.0 193.5h3V201.0h-3zM1245.0 201.0h3V208.5h-3zM1249.0 208.5h3V219.7h-3zM1252.0 219.7h3V253.3h-3zM1272.0 198.5h3V206.0h-3zM1283.0 197.3h3V203.5h-3zM1300.0 191.0h3V199.8h-3zM1310.0 161.1h3V168.6h-3zM1313.0 166.1h3V187.3h-3zM1317.0 191.0h3V212.2h-3zM1320.0 211.0h3V220.9h-3zM1323.0 218.4h3V227.2h-3zM1330.0 212.2h3V227.2h-3zM1340.0 214.7h3V227.2h-3zM1347.0 217.2h3V235.9h-3zM1351.0 234.6h3V238.4h-3zM1354.0 239.6h3V245.9h-3zM1357.0 247.1h3V250.8h-3zM1371.0 229.7h3V252.1h-3zM1384.0 212.3h3V221.0h-3zM1391.0 213.6h3V226.0h-3zM1395.0 222.3h3V229.8h-3zM1398.0 225.9h3V233.4h-3zM1401.0 231.0h3V236.0h-3zM1415.0 226.0h3V238.5h-3zM1418.0 236.0h3V247.2h-3zM1429.0 219.8h3V238.5h-3zM1432.0 234.7h3V241.0h-3zM1439.0 241.0h3V258.4h-3zM1446.0 257.2h3V267.1h-3zM1449.0 267.1h3V285.8h-3zM1462.0 262.1h3V285.8h-3zM1466.0 287.1h3V298.3h-3zM1490.0 257.2h3V267.1h-3zM1493.0 264.6h3V290.8h-3zM1500.0 278.3h3V282.1h-3zM1503.0 284.6h3V300.8h-3zM1507.0 299.5h3V308.3h-3zM1510.0 310.7h3V325.7h-3zM1513.0 322.0h3V328.2h-3z" fill="#ef5350"/>
</g>
<rect x="62" y="731.4" width="1776" height="114.1" fill="#7e57c2" fill-opacity="0.085"/>
<path d="M62 731.4H1838" stroke="#4caf50" stroke-width="1" stroke-dasharray="5.5 5.5" fill="none"/>
<path d="M62 845.5H1838" stroke="#ef5350" stroke-width="1" stroke-dasharray="5.5 5.5" fill="none"/>
<g clip-path="url(#cr)"><path d="M61.9 828.2L65.6 833.8L69.4 843.2L72.6 816.9L76.0 830.1L79.4 846.0L83.5 835.7L86.3 846.0L90.1 860.1L93.8 868.6L96.7 847.9L99.5 809.4L103.6 818.8L106.6 816.0L110.4 802.8L113.6 798.1L116.4 779.3L120.2 784.0L123.5 780.6L127.7 786.8L130.5 779.3L133.7 792.5L137.5 786.8L140.8 784.0L144.6 777.4L147.4 765.2L150.6 778.4L154.4 789.6L157.8 783.1L161.5 780.2L167.2 799.0L174.1 795.3L181.3 805.6L185.0 800.0L188.8 800.9L194.4 784.0L198.7 784.9L201.4 802.8L205.1 800.9L208.5 824.4L215.1 794.3L218.9 804.7L225.4 796.2L228.6 781.2L233.0 804.7L239.5 826.3L242.3 814.1L246.1 811.3L249.5 802.8L252.1 784.0L256.4 785.9L259.3 772.7L263.0 794.3L266.8 793.4L273.4 777.4L276.6 787.8L279.9 784.0L286.5 759.6L289.3 755.8L293.1 768.0L296.5 771.8L300.3 758.6L303.4 767.5L306.6 759.9L311.0 761.8L323.2 829.1L327.3 834.8L330.7 817.8L334.5 839.5L341.0 820.7L344.8 820.7L351.4 832.9L354.6 815.0L358.0 817.8L361.7 819.7L368.3 833.8L372.1 825.4L378.6 841.3L384.7 815.0L388.6 808.1L391.8 815.6L395.6 816.3L398.4 818.8L401.6 829.1L405.5 806.6L408.7 805.0L412.1 773.1L415.3 781.6L419.1 779.9L422.3 783.1L425.3 780.2L429.4 792.5L432.8 778.4L436.0 770.8L439.4 759.9L446.3 771.2L449.5 758.1L452.5 755.8L456.7 759.0L459.5 758.6L463.6 770.3L466.4 755.8L469.4 762.4L473.6 747.3L476.4 749.8L479.6 744.5L483.4 774.6L486.4 771.8L490.5 786.8L493.3 811.3L496.5 815.0L500.8 811.3L503.7 797.2L507.4 827.2L513.1 821.0L517.8 828.2L521.0 830.6L524.7 835.7L530.9 820.7L534.3 803.7L537.5 813.1L544.4 769.0L547.8 792.8L551.6 793.4L558.2 813.1L561.4 805.0L564.4 818.8L568.5 821.6L571.3 822.0L575.1 836.6L578.9 842.3L581.3 847.5L585.4 827.2L588.3 841.3L591.4 843.2L595.8 818.8L598.2 787.8L602.0 791.5L605.2 800.0L608.6 812.2L612.3 807.5L615.5 816.5L619.3 814.4L622.5 791.5L625.5 798.5L628.7 782.1L632.4 769.9L636.2 774.6L639.6 781.2L642.8 769.9L646.5 764.3L649.3 755.8L655.9 751.1L659.3 741.1L663.4 751.1L666.3 745.5L670.4 765.2L673.8 767.1L676.6 745.8L680.4 742.6L683.6 737.9L686.6 743.6L690.1 718.2L693.5 714.1L697.3 720.5L700.1 720.1L703.9 723.5L707.2 720.1L710.4 714.8L714.2 718.6L717.4 715.8L720.4 722.3L724.5 716.7L727.4 718.2L731.1 743.0L733.9 739.8L737.3 731.7L741.5 739.8L744.7 736.1L748.6 750.2L751.2 766.1L754.6 768.4L758.4 768.0L765.5 760.5L768.7 751.1L771.5 762.4L774.9 805.6L777.2 811.3L780.0 814.1L784.7 812.2L788.5 793.8L792.2 806.2L795.4 804.7L798.8 800.0L802.6 810.3L805.4 790.0L809.5 810.3L812.9 786.8L819.1 753.9L822.3 756.7L826.6 744.5L829.8 740.8L836.4 726.7L840.2 721.0L843.5 719.1L846.2 723.8L849.9 720.5L853.3 728.5L856.5 747.3L860.5 739.8L863.7 737.4L866.9 740.8L873.6 735.5L880.6 748.7L883.8 741.7L887.5 734.2L890.5 717.3L893.7 733.2L897.5 743.0L901.3 737.0L904.4 736.1L907.8 738.5L910.7 756.2L914.4 747.3L918.2 742.3L921.6 734.7L924.4 746.0L927.6 744.5L931.3 753.0L934.5 769.9L938.9 766.1L941.3 751.1L944.5 792.5L948.6 773.7L952.0 780.2L955.8 783.6L958.6 777.4L961.4 754.3L965.5 753.5L968.6 767.1L971.4 756.7L975.5 772.7L982.5 821.6L985.5 797.2L988.7 820.1L992.4 806.6L995.6 821.2L1002.8 786.3L1006.2 795.3L1009.3 793.4L1012.7 800.9L1016.9 790.6L1019.7 793.0L1022.9 776.9L1030.0 760.5L1033.2 761.4L1036.6 763.3L1039.8 770.5L1043.6 764.3L1046.9 761.4L1050.7 759.6L1054.1 754.9L1057.3 752.0L1061.0 750.2L1063.9 744.5L1067.1 744.1L1070.4 759.9L1073.6 750.5L1077.0 753.0L1080.4 766.1L1083.6 772.7L1087.4 761.4L1090.6 753.9L1094.3 776.5L1097.7 776.1L1100.5 781.2L1104.7 758.6L1108.0 759.6L1111.2 761.8L1117.4 778.4L1124.4 764.3L1128.7 774.2L1134.4 741.7L1138.1 734.7L1140.0 738.5L1145.6 766.1L1148.5 794.9L1151.7 795.3L1155.4 778.0L1158.8 784.0L1162.0 787.4L1165.8 808.8L1168.6 788.7L1172.5 772.7L1175.7 784.0L1178.5 775.9L1182.3 785.5L1185.5 778.7L1189.4 784.4L1192.6 767.1L1195.5 759.6L1199.6 754.3L1203.0 752.4L1206.4 751.7L1209.9 768.0L1216.5 792.5L1219.9 796.2L1223.7 812.2L1226.5 813.5L1229.3 801.9L1233.4 793.8L1236.4 793.0L1240.6 767.5L1250.9 798.7L1253.4 831.9L1260.3 814.1L1270.3 768.6L1273.5 777.4L1277.2 775.5L1280.6 769.9L1284.4 774.2L1287.6 772.7L1291.0 768.6L1294.2 766.7L1297.5 763.3L1301.3 775.5L1304.5 753.9L1307.7 743.6L1311.4 743.0L1314.8 772.7L1318.2 800.0L1321.4 809.4L1324.6 815.0L1328.6 798.1L1331.4 810.9L1335.5 806.6L1338.7 799.0L1341.7 807.5L1345.5 798.7L1348.7 815.0L1352.4 816.9L1355.6 825.7L1358.4 829.1L1362.8 817.8L1368.8 806.2L1372.5 823.1L1382.5 776.1L1385.7 782.5L1389.7 777.8L1392.8 788.1L1396.0 791.5L1400.4 800.0L1403.2 802.4L1409.8 802.8L1413.9 787.4L1416.7 804.7L1419.7 813.1L1423.5 782.1L1426.7 780.6L1430.4 798.1L1433.3 802.8L1436.5 799.0L1440.4 822.5L1443.6 820.7L1447.4 827.2L1450.2 845.1L1453.6 840.4L1457.3 824.4L1460.5 822.9L1463.7 834.8L1467.7 845.1L1470.9 833.8L1474.2 835.7L1477.4 812.6L1480.6 819.7L1484.4 795.3L1487.4 785.9L1491.5 796.2L1494.7 816.9L1497.2 805.6L1500.0 804.7L1501.4 804.4L1504.8 822.8L1508.8 829.5L1512.1 841.2L1515.5 842.3" stroke="#ffe03d" stroke-width="1.8" fill="none" stroke-linejoin="round"/></g>
<path d="M62 679.5H1911M62 894.5H1911M62 922.5H1911M1841.5 95V922M61.5 57V960M7.5 57V960M62 94.5H1911" stroke="#2a2e39" stroke-width="1" fill="none" shape-rendering="crispEdges"/>
</svg>
<div id="hdr"></div>
<div class="abs" style="left:0;top:56px;width:1915px;height:1px;background:#282d38"></div>
<div class="abs" style="left:1911px;top:57px;width:4px;height:906px;background:#1c232c"></div>
<div class="abs" style="left:0;top:960px;width:1915px;height:3px;background:#2a2e39"></div>
<svg class="abs" style="left:14px;top:18px" width="21" height="15" viewBox="0 0 21 15"><path d="M0 2.1h20.300M0 7.100h20.300M0 12.100h20.300" stroke="#fff" stroke-width="2.400"/></svg>
<div class="abs" style="left:106px;top:9px;font-size:29.600px;line-height:34px;letter-spacing:-0.600px;font-weight:normal;background:linear-gradient(#f4f6f8 25%,#8e9cb2 85%);-webkit-background-clip:text;background-clip:text;color:transparent;-webkit-text-stroke:0.550px #1c232c">ActivTrader</div>
<div class="abs" style="left:250.500px;top:13px;font-size:10px;line-height:10px;color:#c9cdd3">™</div>
<div class="abs" style="left:382px;top:2px;width:161px;height:43px;border:1px solid #5a616c;border-radius:4px;text-align:center;font-size:16.5px;line-height:43px;color:#d6d9de">+&nbsp; New Order</div>
<div class="hv" style="left:1403px">10 000.00 €</div><div class="hl" style="left:1403px">Balance</div>
<div class="hv" style="left:1523px">10 000.00 €</div><div class="hl" style="left:1523px">Equity</div>
<div class="hv" style="left:1643px">0.00 €</div><div class="hl" style="left:1643px">Swap</div>
<div class="hv" style="left:1722px">0.00 €</div><div class="hl" style="left:1722px">Profit</div>
<svg class="abs" style="left:1773px;top:39px" width="9" height="5"><path d="M0 0h8L4 4.5z" fill="#d4d7dc"/></svg>
<svg class="abs" style="left:1900px;top:39px" width="9" height="5"><path d="M0 0h8L4 4.5z" fill="#d4d7dc"/></svg>
<svg class="abs" style="left:1808px;top:20px" width="26" height="18" viewBox="0 0 26 18"><rect x="1" y="1" width="22" height="15" rx="1.5" fill="none" stroke="#8d929b" stroke-width="1.8"/><path d="M1.5 2L12 10L22.5 2" fill="none" stroke="#8d929b" stroke-width="1.8"/></svg>
<div class="abs" style="left:1822px;top:12px;width:18px;height:18px;border-radius:9px;background:#fff;color:#1c232c;font-weight:bold;font-size:12px;line-height:18px;text-align:center">2</div>
<svg class="abs" style="left:1867px;top:12px" width="30" height="30" viewBox="0 0 30 30"><defs><clipPath id="av"><circle cx="15" cy="15" r="14.5"/></clipPath></defs><circle cx="15" cy="15" r="14.5" fill="#12151b"/><g clip-path="url(#av)" fill="#8d929b"><circle cx="15" cy="11" r="5.5"/><path d="M4 28c0-7 5-10 11-10s11 3 11 10z"/></g></svg>
<div class="tb" style="left:71px;font-weight:bold;font-size:13px;color:#868993">GER40</div>
<div class="sep" style="left:162px"></div>
<div class="sep" style="left:200px"></div>
<div class="sep" style="left:239px"></div>
<div class="sep" style="left:341px"></div>
<div class="sep" style="left:449px"></div>
<div class="sep" style="left:512px"></div>
<div class="sep" style="left:1703px"></div>
<div class="sep" style="left:1742px"></div>
<div class="sep" style="left:1833px"></div>
<div class="sep" style="left:1872px"></div>
<div class="tb" style="left:176px">D</div>
<svg class="abs" style="left:212px;top:65px" width="18" height="22" viewBox="0 0 18 22"><g fill="none" stroke="#868993" stroke-width="1.2"><path d="M4.5 0v3M4.5 16v5M13.5 3v4M13.5 14v4"/><rect x="2.5" y="3" width="4" height="13"/><rect x="11.5" y="7" width="4" height="7"/></g></svg>
<svg class="abs" style="left:248px;top:66px" width="20" height="20" viewBox="0 0 20 20"><g fill="none" stroke="#868993" stroke-width="1.1"><circle cx="10" cy="10" r="9"/><path d="M10 5.5v9M5.5 10h9"/></g></svg>
<div class="tb" style="left:275px">Compare</div>
<div class="tb" style="left:353px;font-size:21px;line-height:32px">ƒ<span style="font-size:10px;position:relative;top:3px;left:-1px">x</span></div>
<div class="tb" style="left:377px">Indicators</div>
<svg class="abs" style="left:458px;top:68px" width="16" height="14" viewBox="0 0 16 14"><path d="M5.5 1.5L1.5 5.5L5.5 9.5M1.5 5.5H11a3.5 3.5 0 0 1 0 7H9" fill="none" stroke="#868993" stroke-width="1.2"/></svg>
<svg class="abs" style="left:486px;top:68px" width="16" height="14" viewBox="0 0 16 14"><path d="M10.5 1.5L14.5 5.5L10.5 9.5M14.5 5.5H5a3.5 3.5 0 0 0 0 7H7" fill="none" stroke="#3b3f4b" stroke-width="1.2"/></svg>
<svg class="abs" style="left:1713px;top:67px" width="20" height="18" viewBox="0 0 20 18"><rect x="1" y="1" width="18" height="15.5" rx="2" fill="none" stroke="#868993" stroke-width="1.2"/></svg>
<svg class="abs" style="left:1749px;top:66px" width="26" height="18" viewBox="0 0 26 18"><path d="M6 16.5H20.5a4.5 4.5 0 0 0 .8-8.9A7.5 7.5 0 0 0 6.8 6 5.3 5.3 0 0 0 6 16.5z" fill="none" stroke="#868993" stroke-width="1.2" stroke-dasharray="4 2.5"/></svg>
<div class="tb" style="left:1779px"><span class="sx" style="transform:scaleX(.9)">Save</span></div>
<svg class="abs" style="left:1817px;top:72px" width="11" height="7"><path d="M1 1l4.5 4L10 1" fill="none" stroke="#868993" stroke-width="1.2"/></svg>
<svg class="abs" style="left:1841px;top:64px" width="24" height="24" viewBox="0 0 24 24"><path d="M21.56 10.33L21.56 13.67L19.07 13.82L18.28 15.72L19.94 17.58L17.58 19.94L15.72 18.28L13.82 19.07L13.67 21.56L10.33 21.56L10.18 19.07L8.28 18.28L6.42 19.94L4.06 17.58L5.72 15.72L4.93 13.82L2.44 13.67L2.44 10.33L4.93 10.18L5.72 8.28L4.06 6.42L6.42 4.06L8.28 5.72L10.18 4.93L10.33 2.44L13.67 2.44L13.82 4.93L15.72 5.72L17.58 4.06L19.94 6.42L18.28 8.28L19.07 10.18z" fill="none" stroke="#868993" stroke-width="1.2" stroke-linejoin="round"/><circle cx="12" cy="12" r="2.8" fill="none" stroke="#868993" stroke-width="1.2"/></svg>
<svg class="abs" style="left:1880px;top:65px" width="24" height="20" viewBox="0 0 24 20"><path d="M3.5 4.5H7L9 1.5H15L17 4.5H20.5a2 2 0 0 1 2 2V16a2 2 0 0 1-2 2H3.5a2 2 0 0 1-2-2V6.5a2 2 0 0 1 2-2z" fill="none" stroke="#868993" stroke-width="1.2"/><circle cx="12" cy="11" r="4.3" fill="none" stroke="#868993" stroke-width="1.2"/></svg>
<div class="ic" style="top:66.5px"><svg viewBox="0 0 28 28" fill="none" stroke="#8b8e98" stroke-width="1.1" ><path d="M14.5 3v7.5M14.5 18v7.5M3 14.5h8M18 14.5h8" stroke="#2196f3" stroke-width="1.3"/></svg></div>
<div class="ic" style="top:102px"><svg viewBox="0 0 28 28" fill="none" stroke="#8b8e98" stroke-width="1.1" ><path d="M6.5 21L21 6.8"/><circle cx="5.1" cy="22.5" r="2"/><circle cx="22.4" cy="5.4" r="2"/></svg></div>
<div class="ic" style="top:138.4px"><svg viewBox="0 0 28 28" fill="none" stroke="#8b8e98" stroke-width="1.1" ><path d="M6.5 9.9L13.4 3.1M6.5 20.5L19.6 8.2M17.9 20.5L24.6 14M6.5 12.7L15.1 20.6"/><circle cx="5.1" cy="11.3" r="2"/><circle cx="5.1" cy="21.9" r="2"/><circle cx="16.5" cy="21.9" r="2"/></svg></div>
<div class="ic" style="top:175px"><svg viewBox="0 0 28 28" fill="none" stroke="#8b8e98" stroke-width="1.1" ><path d="M2.5 21.5L8.6 13.2C10.6 10.3 15 10 17 13.2C19 17 16 21.5 11 21.5zM16.5 7.2C16.2 10.8 19.3 12.4 21.4 10.4L27.2 5"/></svg></div>
<div class="ic" style="top:209px"><svg viewBox="0 0 28 28" fill="none" stroke="#8b8e98" stroke-width="1.1" ><path d="M8.4 10V6.6H20.8V10M14.6 6.6V23.8M11.8 23.8H17.4" stroke-width="1.2"/></svg></div>
<div class="ic" style="top:245px"><svg viewBox="0 0 28 28" fill="none" stroke="#8b8e98" stroke-width="1.1" ><path d="M5.1 23.4L8.3 6L12.4 13.7L20.5 7L23.6 20.3L12.4 13.7L5.1 23.4"/><circle cx="5.1" cy="23.4" r="1.9" fill="#131722"/><circle cx="8.3" cy="6" r="1.9" fill="#131722"/><circle cx="12.4" cy="13.7" r="1.9" fill="#131722"/><circle cx="20.5" cy="7" r="1.9" fill="#131722"/><circle cx="23.6" cy="20.3" r="1.9" fill="#131722"/></svg></div>
<div class="ic" style="top:282px"><svg viewBox="0 0 28 28" fill="none" stroke="#8b8e98" stroke-width="1.1" ><path d="M6.2 6.3H24.2M6.2 16.5H20.2M6.2 22.5H24.2"/><path d="M8.7 14L21.5 8.2" stroke-dasharray="1.5 2.3"/><circle cx="4.1" cy="6.3" r="2"/><circle cx="4.1" cy="16.5" r="2"/><circle cx="22.2" cy="16.5" r="2"/><circle cx="4.1" cy="22.5" r="2"/></svg></div>
<div class="ic" style="top:318px"><svg viewBox="0 0 28 28" fill="none" stroke="#8b8e98" stroke-width="1.1" ><circle cx="13.3" cy="13.9" r="7.9" stroke-width="1.2"/><circle cx="10.6" cy="11.6" r="1" fill="#9598a1" stroke="none"/><circle cx="16" cy="11.6" r="1" fill="#9598a1" stroke="none"/><path d="M9.3 15.5c1.2 3 6.800 3 8 0" stroke-width="1.2"/></svg></div>
<div class="abs" style="left:8px;top:356px;width:53px;height:1px;background:#2a2e39"></div>
<div class="ic" style="top:367px"><svg viewBox="0 0 28 28" fill="none" stroke="#8b8e98" stroke-width="1.1" ><path d="M2 20.3L21.100 2.300L25.900 7.900L7.200 25.500zM5.500 17l2.200 2.400M8.500 14.200l1.500 1.600M11.500 11.400l2.200 2.400M14.500 8.600l1.500 1.600M17.500 5.800l2.200 2.400"/></svg></div>
<div class="ic" style="top:402.4px"><svg viewBox="0 0 28 28" fill="none" stroke="#8b8e98" stroke-width="1.1" ><circle cx="12.400" cy="13.300" r="8.300"/><path d="M18.300 19.200L22.500 23M8.900 13.300h7M12.400 9.800v7"/></svg></div>
<div class="abs" style="left:8px;top:441px;width:53px;height:1px;background:#2a2e39"></div>
<div class="ic" style="top:452px"><svg viewBox="0 0 28 28" fill="none" stroke="#8b8e98" stroke-width="1.1" ><path d="M6.400 22.500V12.200a7.600 7.600 0 0 1 15.200 0v10.300h-4.400V12.200a3.200 3.200 0 0 0-6.400 0v10.300zM6.400 18.500h4.400M17.200 18.500h4.400" stroke-width="1.200"/></svg></div>
<div class="ic" style="top:487px"><svg viewBox="0 0 28 28" fill="none" stroke="#8b8e98" stroke-width="1.1" ><path d="M2.900 18.500L4.500 14L15.800 4.300L19.300 7.800L8 17.500zM13.500 6.300L17.300 9.800M4.500 14L8 17.500"/><rect x="15.800" y="19" width="8" height="6" rx="1"/><path d="M17.800 19v-1.800a2 2 0 0 1 4-0.500"/><rect x="19.300" y="21" width="1" height="2" fill="#9598a1" stroke="none"/></svg></div>
<div class="ic" style="top:524.7px"><svg viewBox="0 0 28 28" fill="none" stroke="#8b8e98" stroke-width="1.1" ><rect x="6.200" y="11.800" width="15.300" height="11" rx="1.800" stroke-width="1.200"/><path d="M10 11.800V9a3.900 3.900 0 0 1 7.700-0.800" stroke-width="1.200"/><rect x="13.300" y="16" width="1.200" height="2.800" fill="#9598a1" stroke="none"/></svg></div>
<div class="ic" style="top:558px"><svg viewBox="0 0 28 28" fill="none" stroke="#8b8e98" stroke-width="1.1" ><path d="M4 12.100c2.500-4.500 5.700-6.800 9.300-6.800s6.800 2.300 9.200 6.800c-2.400 4.500-5.600 6.800-9.200 6.800s-6.800-2.300-9.300-6.800z"/><circle cx="13.200" cy="12.100" r="3"/><path d="M15 26.500l3-3.300c1.200-1 3-.3 2.500 1.300c-.8 1.700-3.500 2-5.500 2zM20.500 22.500c.8.800 1.600.6 2.200 0l2-2" stroke-width="1"/></svg></div>
<div class="abs" style="left:8px;top:598px;width:53px;height:1px;background:#2a2e39"></div>
<div class="ic" style="top:609.8px"><svg viewBox="0 0 28 28" fill="none" stroke="#8b8e98" stroke-width="1.1" ><path d="M7.300 7.400h13.500v13.800a2 2 0 0 1-2 2h-9.500a2 2 0 0 1-2-2zM5.200 7.400h17.800M11 7.400V4.800h6.200v2.600M11.700 11.500v8M16.500 11.500v8" stroke-width="1.200"/></svg></div>
<svg class="abs" style="left:0;top:510px" width="8" height="19"><path d="M-0.500 1.500l5.500 8L-0.500 17.500" fill="none" stroke="#2196f3" stroke-width="2"/></svg>
<div class="abs" style="left:71px;top:103px;font-size:16px;line-height:18px;color:#c1c4cd;transform-origin:0 50%;transform:scaleX(.915)">Ger40 <span style="color:#787b86">·</span> 1D</div>
<div class="abs" style="left:160px;top:103px;width:17px;height:17px;border-radius:9px;background:#2a2e39"><div style="position:absolute;left:4px;top:7px;width:9px;height:3px;border-radius:1.500px;background:#b2b5be"></div></div>
<div class="abs" style="left:192.8px;top:106px;font-size:12.4px;line-height:14px;color:#d1d4dc">O<span style="color:#ef5350;margin-left:1px">14813.17</span></div>
<div class="abs" style="left:261.7px;top:106px;font-size:12.4px;line-height:14px;color:#d1d4dc">H<span style="color:#ef5350;margin-left:1px">14852.66</span></div>
<div class="abs" style="left:329.9px;top:106px;font-size:12.4px;line-height:14px;color:#d1d4dc">L<span style="color:#ef5350;margin-left:1px">14625.33</span></div>
<div class="abs" style="left:395.4px;top:106px;font-size:12.4px;line-height:14px;color:#d1d4dc">C<span style="color:#ef5350;margin-left:1px">14751.61</span></div>
<div class="abs" style="left:462.5px;top:106px;font-size:12.4px;line-height:14px;color:#ef5350">−23.82 (−0.16%)</div>
<div class="abs" style="left:70px;top:127px;width:69px;height:38px;border:1px solid #ef5350;border-radius:3px;color:#ef5350;font-size:13px;line-height:38px;text-align:center">14751.61</div>
<div class="abs" style="left:188px;top:127px;width:68px;height:38px;border:1px solid #0a9b8e;border-radius:3px;color:#0a9b8e;font-size:13px;line-height:38px;text-align:center">14753.31</div>
<div class="abs" style="left:144px;top:128px;width:39px;text-align:center;font-size:11px;line-height:13px;color:#d1d4dc">1.70</div>
<div class="abs" style="left:144px;top:144px;width:39px;height:20px;border-radius:3px;background:#1e222d;text-align:center;font-size:13px;line-height:20px;color:#d1d4dc">0.25</div>
<div class="ema" style="top:175px">EMA 200 close 0<b style="color:#f44336">15421.91</b></div>
<div class="ema" style="top:199px">EMA 200 close 0<b style="color:#f44336">15421.91</b></div>
<div class="ema" style="top:223px">EMA 100 close 0<b style="color:#2196f3">15577.42</b></div>
<div class="ema" style="top:247px">EMA 200 close 0<b style="color:#f44336">15421.91</b></div>
<div class="ema" style="top:271px">EMA 50 close 0<b style="color:#aa2af5">15447.71</b></div>
<div class="abs" style="left:71px;top:292px;width:29px;height:20px;border:1px solid #363a45;border-radius:3px;background:#131722"><svg width="27" height="18" style="display:block"><path d="M9.500 11.500l4-4 4 4" fill="none" stroke="#d1d4dc" stroke-width="1.300"/></svg></div>
<div class="abs" style="left:71px;top:690px;font-size:12px;line-height:14px;color:#b2b5be">RSI <span style="color:#787b86">14</span> &nbsp;<span style="color:#ffe03d">31.06</span></div>
<div class="ax" style="top:655px"><span>11200.00</span></div>
<div class="ax" style="top:618px"><span>11600.00</span></div>
<div class="ax" style="top:580px"><span>12000.00</span></div>
<div class="ax" style="top:543px"><span>12400.00</span></div>
<div class="ax" style="top:505px"><span>12800.00</span></div>
<div class="ax" style="top:468px"><span>13200.00</span></div>
<div class="ax" style="top:393px"><span>14000.00</span></div>
<div class="ax" style="top:356px"><span>14400.00</span></div>
<div class="ax" style="top:281px"><span>15200.00</span></div>
<div class="ax" style="top:243px"><span>15600.00</span></div>
<div class="ax" style="top:206px"><span>16000.00</span></div>
<div class="ax" style="top:169px"><span>16400.00</span></div>
<div class="ax" style="top:131px"><span>16800.00</span></div>
<div class="ax" style="top:94px"><span>17200.00</span></div>
<div class="ax" style="top:868px"><span>20.00</span></div>
<div class="ax" style="top:811px"><span>40.00</span></div>
<div class="ax" style="top:754px"><span>60.00</span></div>
<div class="ax" style="top:697px"><span>80.00</span></div>
<div class="tag" style="top:152px"><span>16543.72</span></div>
<div class="tag" style="top:257px"><span>15426.01</span></div>
<div class="tag" style="top:374px"><span>14176.30</span></div>
<div class="tag" style="top:426px"><span>13617.58</span></div>
<div class="tag" style="top:491px"><span>12926.29</span></div>
<div class="tag" style="top:595px"><span>11808.87</span></div>
<div class="tag" style="top:337px"><span>14735.01</span></div>
<div class="tag" style="top:320px;background:#ef5350;color:#fff"><span>14751.61</span></div>
<div class="tl" style="left:79px">Mar</div>
<div class="tl" style="left:222px">May</div>
<div class="tl" style="left:371.5px">Jul</div>
<div class="tl" style="left:520.5px">Sep</div>
<div class="tl" style="left:666.5px">Nov</div>
<div class="tl" style="font-weight:bold;left:812.5px">2023</div>
<div class="tl" style="left:955px">Mar</div>
<div class="tl" style="left:1094px">May</div>
<div class="tl" style="left:1243.5px">Jul</div>
<div class="tl" style="left:1392px">Sep</div>
<div class="tl" style="left:1542px">Nov</div>
<div class="tl" style="font-weight:bold;left:1687.5px">2024</div>
<div class="abs" style="left:1826px;top:903px;width:15px;overflow:hidden;font-size:11.500px;line-height:12px;color:#b2b5be">Mar</div>
<svg class="abs" style="left:1866px;top:898px" width="22" height="22" viewBox="0 0 22 22"><circle cx="11" cy="10.500" r="4.400" fill="none" stroke="#9598a1" stroke-width="1.200"/><path d="M11 2.500v2M11 16.500v2M3 10.500h2M17 10.500h2M5.300 4.800l1.500 1.500M15.200 14.700l1.500 1.500M5.300 16.200l1.500-1.500M15.200 6.300l1.500-1.500" stroke="#9598a1" stroke-width="1.200"/></svg>
<div class="abs" style="left:55px;top:876px;width:9px;height:26px;border:1px solid #363a45;border-radius:4px;background:#131722;color:#9598a1;font-size:11px;line-height:22px;text-align:center">‹</div>
<div class="abs" style="left:78px;top:936px;font-size:13px;line-height:14px;color:#d1d4dc;transform-origin:0 50%;transform:scaleX(.9)">Powered by <span style="color:#2196f3">TradingView</span></div>
<div class="abs" style="left:220px;top:923px;width:1px;height:37px;background:#2a2e39"></div>
<div class="rg" style="left:237px">1D</div>
<div class="rg" style="left:267px">5D</div>
<div class="rg" style="left:297px">1M</div>
<div class="rg" style="left:328px">3M</div>
<div class="rg" style="left:359px">6M</div>
<div class="rg" style="left:391px">1Y</div>
<div class="rg" style="left:420px">5Y</div>
<div class="rg" style="left:449px">All</div>
<div class="abs" style="left:482px;top:932px;width:1px;height:20px;background:#2a2e39"></div>
<svg class="abs" style="left:497px;top:932px" width="22" height="20" viewBox="0 0 22 20"><g fill="none" stroke="#9598a1" stroke-width="1.200"><path d="M3.500 9.500V5.500a2 2 0 0 1 2-2h11a2 2 0 0 1 2 2v9a2 2 0 0 1-2 2h-5M3.500 7.500h15M7.500 1.500v4M14.500 1.500v4M1.500 13.500h7M6.500 11l2.500 2.500-2.500 2.500"/></g></svg>
<div class="rg" style="left:1669px;color:#8a8d97;transform:scaleX(.97)">23:20:56 (UTC+2)</div>
<div class="abs" style="left:1794px;top:932px;width:1px;height:20px;background:#2a2e39"></div>
<div class="rg" style="left:1811px">%</div><div class="rg" style="left:1839px">log</div><div class="rg" style="left:1871px">auto</div>
<div class="abs" style="left:1890px;top:918px;width:50px;height:50px;border-radius:25px;background:#1c232c"></div>
<svg class="abs" style="left:1897px;top:932px" width="12" height="20"><path d="M10 2L3 10l7 8" fill="none" stroke="#2196f3" stroke-width="2"/></svg>
</div></body></html>
